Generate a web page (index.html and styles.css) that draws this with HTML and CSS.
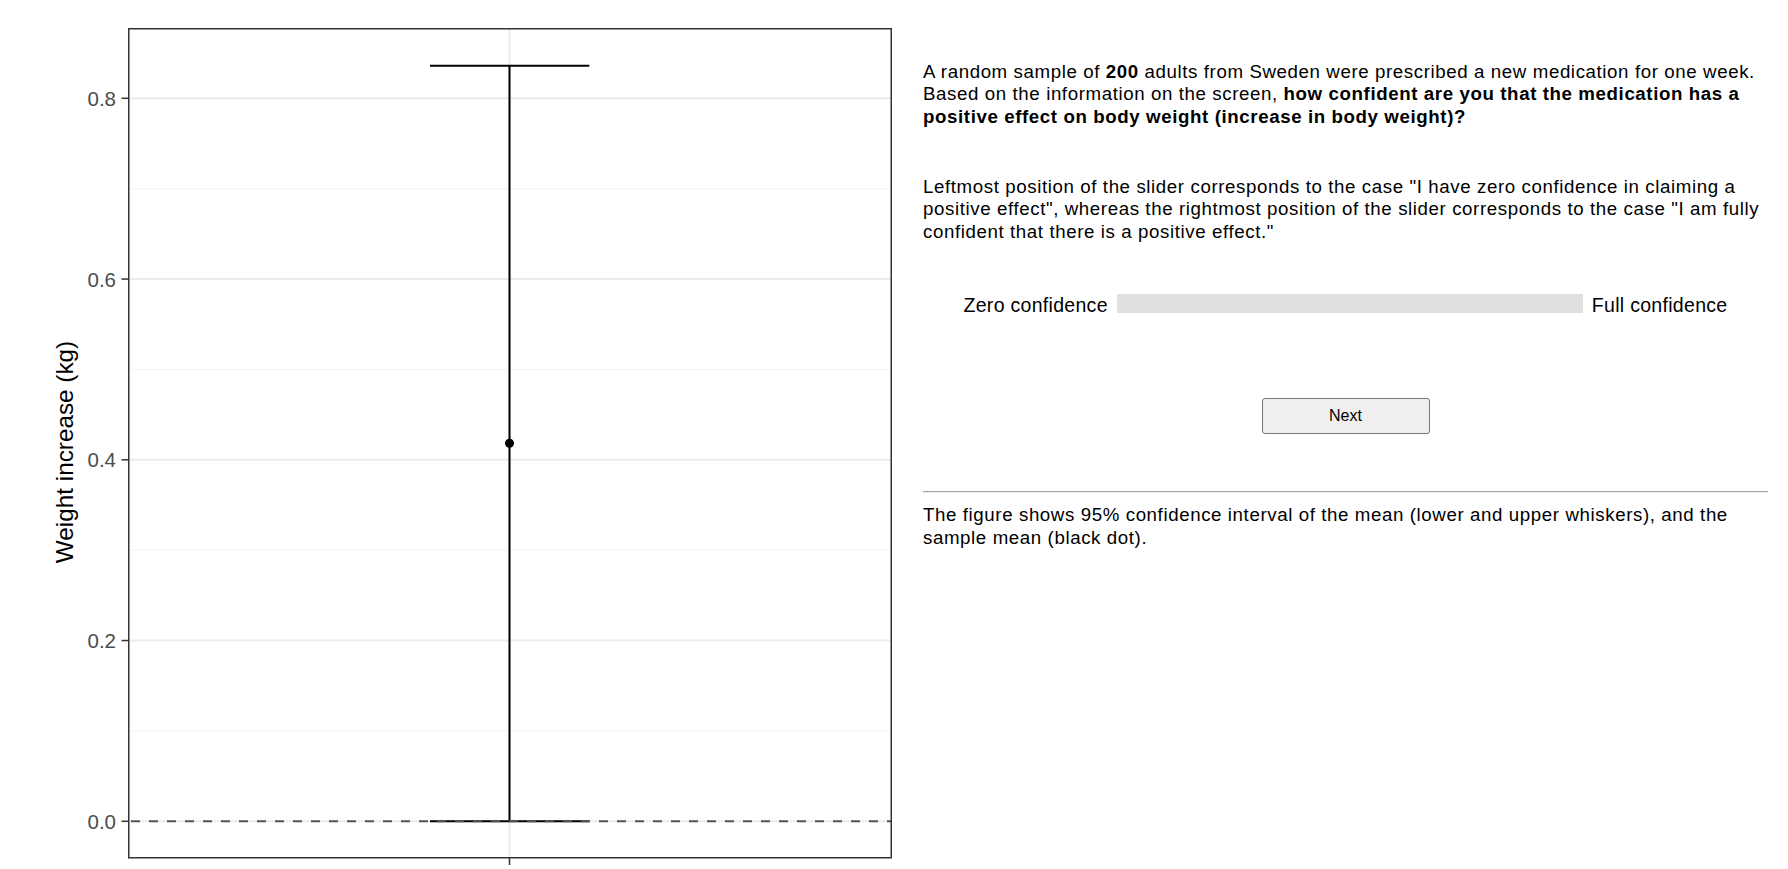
FILE: index.html
```html
<!DOCTYPE html>
<html lang="en">
<head>
<meta charset="utf-8">
<title>Confidence question</title>
<link rel="stylesheet" href="styles.css">
</head>
<body>
<div class="page">
  <div class="plot">
    <svg class="plot-svg" width="923" height="869" viewBox="0 0 923 869" xmlns="http://www.w3.org/2000/svg">
      <rect x="128" y="28" width="763.5" height="830" fill="#ffffff"/>
      <g stroke="#f3f3f3" stroke-width="1">
        <line x1="128" y1="188.7" x2="891.5" y2="188.7"/>
        <line x1="128" y1="369.4" x2="891.5" y2="369.4"/>
        <line x1="128" y1="550.2" x2="891.5" y2="550.2"/>
        <line x1="128" y1="730.9" x2="891.5" y2="730.9"/>
      </g>
      <g stroke="#ebebeb" stroke-width="2">
        <line x1="128" y1="98.3" x2="891.5" y2="98.3"/>
        <line x1="128" y1="279.05" x2="891.5" y2="279.05"/>
        <line x1="128" y1="459.8" x2="891.5" y2="459.8"/>
        <line x1="128" y1="640.55" x2="891.5" y2="640.55"/>
        <line x1="128" y1="821.3" x2="891.5" y2="821.3"/>
        <line x1="509.5" y1="28" x2="509.5" y2="858"/>
      </g>
      <g stroke="#000000" stroke-width="2">
        <line x1="509.5" y1="65.7" x2="509.5" y2="821.3"/>
        <line x1="430" y1="65.7" x2="589.3" y2="65.7"/>
        <line x1="430" y1="821.3" x2="589.3" y2="821.3"/>
      </g>
      <line x1="128" y1="821.3" x2="891.5" y2="821.3" stroke="#555555" stroke-width="2" stroke-dasharray="9 9" stroke-dashoffset="-3"/>
      <circle cx="509.5" cy="443.3" r="4.5" fill="#000000"/>
      <rect x="128.75" y="28.75" width="762.5" height="829" fill="none" stroke="#333333" stroke-width="1.5"/>
      <g stroke="#333333" stroke-width="1.5">
        <line x1="121.5" y1="98.3" x2="128" y2="98.3"/>
        <line x1="121.5" y1="279.05" x2="128" y2="279.05"/>
        <line x1="121.5" y1="459.8" x2="128" y2="459.8"/>
        <line x1="121.5" y1="640.55" x2="128" y2="640.55"/>
        <line x1="121.5" y1="821.3" x2="128" y2="821.3"/>
        <line x1="509.5" y1="858" x2="509.5" y2="865"/>
      </g>
      <g class="tick-labels" text-anchor="end">
        <text x="116" y="105.8">0.8</text>
        <text x="116" y="286.55">0.6</text>
        <text x="116" y="467.3">0.4</text>
        <text x="116" y="648.05">0.2</text>
        <text x="116" y="828.8">0.0</text>
      </g>
      <text class="axis-title" x="0" y="0" text-anchor="middle" transform="translate(73 452) rotate(-90)">Weight increase (kg)</text>
    </svg>
  </div>
  <div class="content">
    <p class="question">A random sample of <b>200</b> adults from Sweden were prescribed a new medication for one week. Based on the information on the screen, <b>how confident are you that the medication has a positive effect on body weight (increase in body weight)?</b></p>
    <p class="instructions">Leftmost position of the slider corresponds to the case "I have zero confidence in claiming a positive effect", whereas the rightmost position of the slider corresponds to the case "I am fully confident that there is a positive effect."</p>
    <div class="slider-row">
      <span class="slider-label">Zero confidence</span>
      <div class="slider-track"></div>
      <span class="slider-label">Full confidence</span>
    </div>
    <div class="actions">
      <button class="next-btn" type="button">Next</button>
    </div>
    <hr class="divider">
    <p class="caption">The figure shows 95% confidence interval of the mean (lower and upper whiskers), and the sample mean (black dot).</p>
  </div>
</div>
</body>
</html>
```

FILE: styles.css
```css
html, body {
  margin: 0;
  padding: 0;
  background: #ffffff;
}

body {
  font-family: "Liberation Sans", Arial, sans-serif;
  color: #000000;
}

.page {
  display: flex;
  align-items: flex-start;
}

.plot {
  flex: none;
  width: 923px;
  height: 869px;
}

.plot-svg {
  display: block;
}

.tick-labels text {
  font-family: "Liberation Sans", Arial, sans-serif;
  font-size: 20.5px;
  fill: #4d4d4d;
}

.axis-title {
  font-family: "Liberation Sans", Arial, sans-serif;
  font-size: 24.3px;
  fill: #000000;
}

.content {
  flex: none;
  width: 845px;
  padding-top: 60.6px;
  font-size: 18.7px;
  line-height: 22.5px;
  letter-spacing: 0.6px;
}

.content p {
  margin: 0;
}

.instructions {
  margin-top: 47.5px !important;
}

.slider-row {
  margin-top: 51px;
  display: flex;
  justify-content: center;
  align-items: flex-start;
  gap: 9px;
}

.slider-label {
  white-space: nowrap;
  font-size: 19.5px;
  letter-spacing: 0.3px;
}

.slider-track {
  width: 466px;
  height: 19px;
  background: #e0e0e0;
}

.actions {
  margin-top: 81.8px;
  display: flex;
  justify-content: center;
}

.next-btn {
  width: 168px;
  height: 36px;
  padding: 0;
  background: #efefef;
  border: 1px solid #767676;
  border-radius: 3px;
  font-family: "Liberation Sans", Arial, sans-serif;
  font-size: 16px;
  letter-spacing: 0;
  color: #000000;
}

.divider {
  margin: 56.7px 0 0 0;
  height: 0;
  border: none;
  border-top: 1px solid #a0a0a0;
  border-bottom: 1px solid #eeeeee;
}

.caption {
  margin-top: 11px !important;
}
```
